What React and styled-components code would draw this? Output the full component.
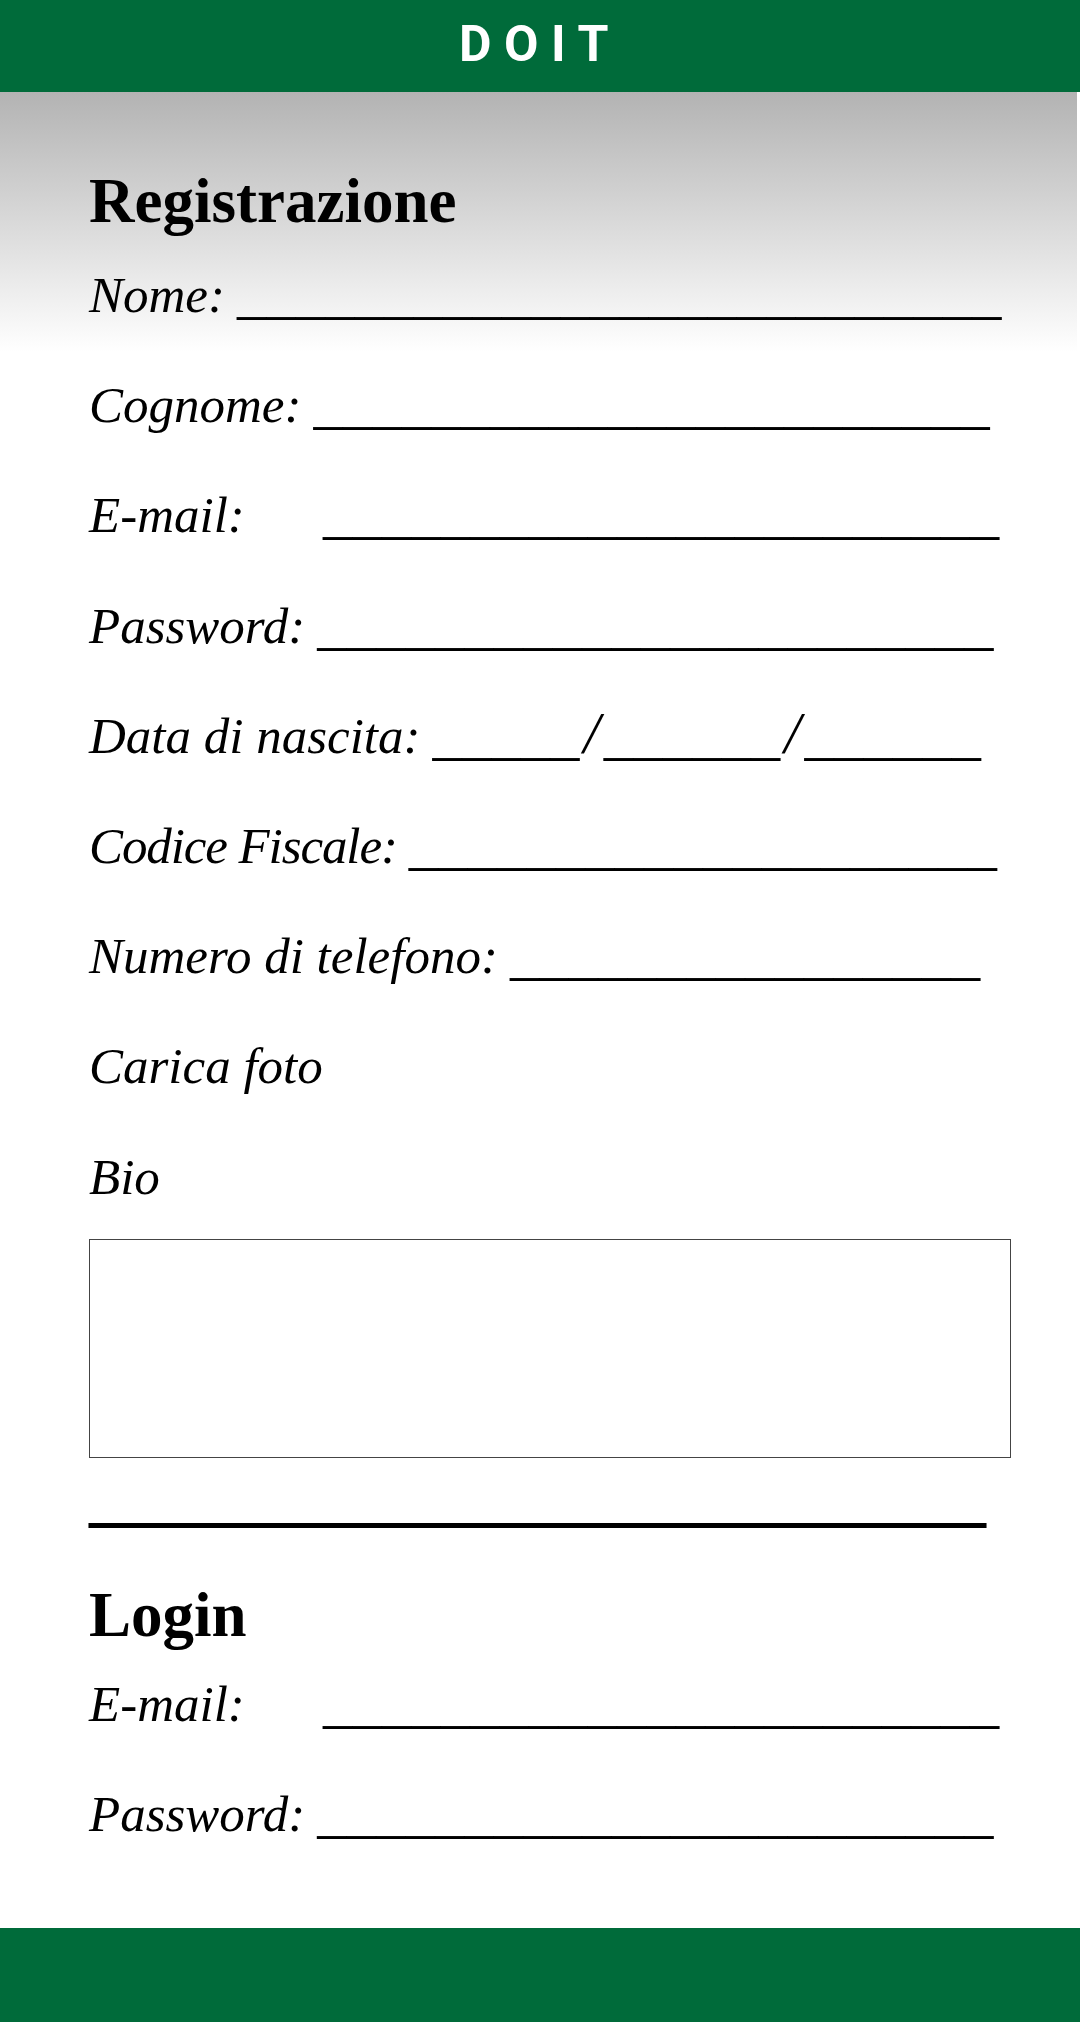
import React from "react";
import styled, { createGlobalStyle } from "styled-components";

const GlobalStyle = createGlobalStyle`
  html, body { margin: 0; padding: 0; }
  body {
    background: #ffffff;
    font-family: "Liberation Serif", "Times New Roman", serif;
    color: #000;
  }
`;

const Page = styled.div`
  min-height: 100vh;
  display: flex;
  flex-direction: column;
`;

const Header = styled.header`
  height: 92px;
  background: #006b3a;
  display: flex;
  align-items: center;
  justify-content: center;
`;

const Brand = styled.h1`
  margin: 0;
  padding: 0 0 4px 0;
  font-family: Roboto, "Open Sans", sans-serif;
  font-weight: 700;
  font-size: 50px;
  line-height: 1;
  letter-spacing: 12.5px;
  color: #ffffff;
`;

const Main = styled.main`
  flex: 1;
  margin-right: 3px;
  padding: 74px 0 0 89px;
  background: linear-gradient(to bottom, #b3b3b3 0px, #ffffff 260px) no-repeat, #ffffff;
  background-size: 100% 260px;
`;

const Title = styled.h2`
  margin: 0 0 ${(p) => p.$after}px;
  font-weight: 700;
  font-size: 63px;
  line-height: 70px;
`;

const FieldList = styled.div`
  display: flex;
  flex-direction: column;
  gap: 51.2px;
`;

const Row = styled.div`
  display: flex;
  align-items: baseline;
  gap: 12px;
  height: 59px;
`;

const Label = styled.span`
  font-style: italic;
  font-size: 51px;
  line-height: 59px;
  white-space: nowrap;
  letter-spacing: ${(p) => (p.$tight ? "-1.1px" : "normal")};
  min-width: ${(p) => (p.$width ? `${p.$width}px` : "auto")};
`;

const Blank = styled.span`
  font-style: italic;
  font-size: 58.8px;
  line-height: 0;
  white-space: nowrap;
`;

const Slash = styled.span`
  margin: 0 4px;
`;

const BioBox = styled.div`
  margin-top: 32px;
  width: 920px;
  height: 217px;
  border: 1px solid #444;
  background: #fff;
`;

const Divider = styled.div`
  margin-top: 2px;
  font-weight: 700;
  font-size: 69px;
  line-height: 70px;
  height: 70px;
  white-space: nowrap;
`;

const LoginTitle = styled(Title)`
  margin-top: 50px;
`;

const Footer = styled.footer`
  height: 94px;
  background: #006b3a;
`;

const u = (n) => "_".repeat(n);

function Field({ label, blank, width, tight }) {
  return (
    <Row>
      <Label $width={width} $tight={tight}>
        {label}
      </Label>
      {blank ? <Blank>{blank}</Blank> : null}
    </Row>
  );
}

export default function App() {
  return (
    <>
      <GlobalStyle />
      <Page>
        <Header>
          <Brand>DOIT</Brand>
        </Header>
        <Main>
          <Title $after={30}>Registrazione</Title>
          <FieldList>
            <Field label="Nome:" blank={u(26)} />
            <Field label="Cognome:" blank={u(23)} />
            <Field label="E-mail:" blank={u(23)} width={222} />
            <Field label="Password:" blank={u(23)} />
            <Row>
              <Label>Data di nascita:</Label>
              <Blank>
                {u(5)}
                <Slash>/</Slash>
                {u(6)}
                <Slash>/</Slash>
                {u(6)}
              </Blank>
            </Row>
            <Field label="Codice Fiscale:" blank={u(20)} tight />
            <Field label="Numero di telefono:" blank={u(16)} />
            <Field label="Carica foto" />
            <Field label="Bio" />
          </FieldList>
          <BioBox />
          <Divider>{u(26)}</Divider>
          <LoginTitle $after={25}>Login</LoginTitle>
          <FieldList>
            <Field label="E-mail:" blank={u(23)} width={222} />
            <Field label="Password:" blank={u(23)} />
          </FieldList>
        </Main>
        <Footer />
      </Page>
    </>
  );
}
